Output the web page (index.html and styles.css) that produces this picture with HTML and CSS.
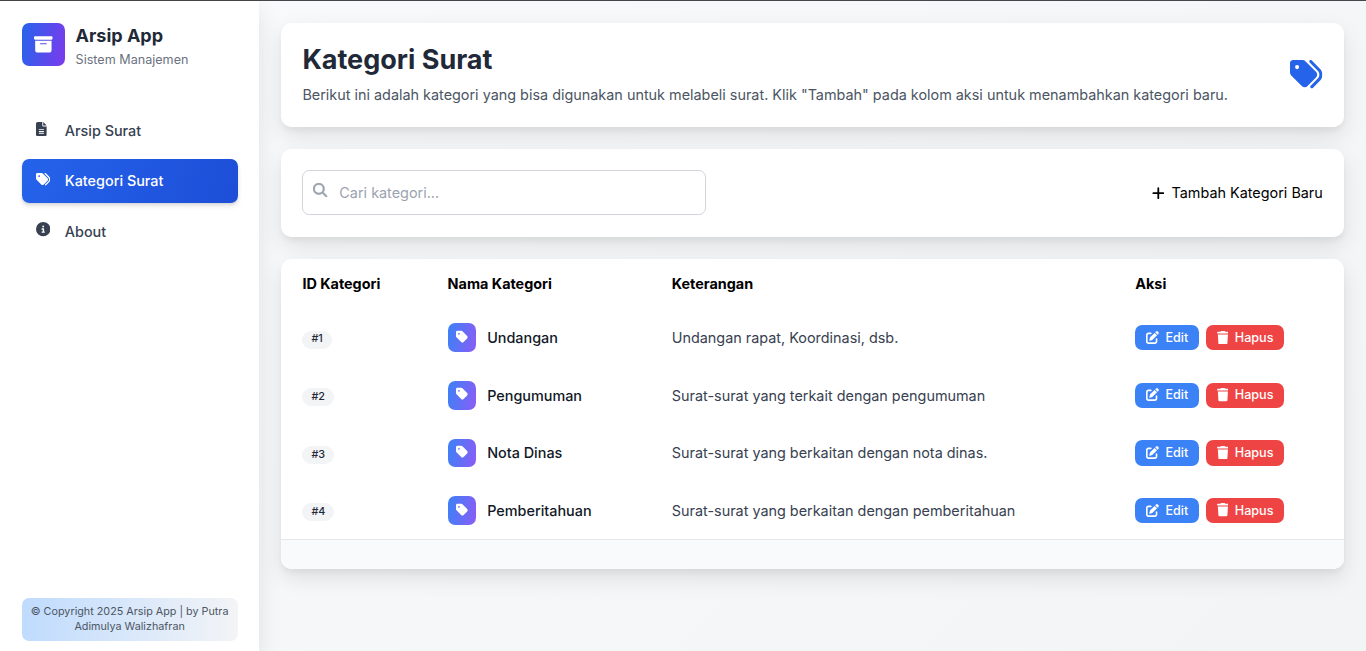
FILE: index.html
```html
<!DOCTYPE html>
<html lang="id">
<head>
<meta charset="utf-8">
<title>Kategori Surat</title>
<link rel="stylesheet" href="styles.css">
</head>
<body>
<svg class="sprite" aria-hidden="true">
  <symbol id="box" viewBox="0 0 512 512"><path d="M32 32H480c17.700 0 32 14.300 32 32V96c0 17.700-14.300 32-32 32H32C14.300 128 0 113.700 0 96V64C0 46.300 14.300 32 32 32zm0 128H480V416c0 35.300-28.700 64-64 64H96c-35.300 0-64-28.700-64-64V160zm128 80c0 8.800 7.200 16 16 16H336c8.800 0 16-7.200 16-16s-7.200-16-16-16H176c-8.800 0-16 7.200-16 16z"/></symbol>
  <symbol id="tags" viewBox="0 0 512 512"><path d="M345 39.100L472.800 168.400c52.400 53 52.400 138.200 0 191.200L360.800 472.900c-9.300 9.400-24.500 9.500-33.900 .2s-9.500-24.500-.2-33.900L438.600 325.900c33.900-34.300 33.900-89.400 0-123.700L310.900 72.900c-9.300-9.400-9.200-24.600 .2-33.900s24.600-9.200 33.900 .2zM0 229.500V80C0 53.500 21.500 32 48 32H197.500c17 0 33.300 6.700 45.300 18.700l168 168c25 25 25 65.500 0 90.500L277.300 442.700c-25 25-65.500 25-90.500 0l-168-168C6.700 262.700 0 246.500 0 229.500zM144 144a32 32 0 1 0 -64 0 32 32 0 1 0 64 0z"/></symbol>
  <symbol id="tag" viewBox="0 0 448 512"><path d="M0 80V229.500c0 17 6.700 33.300 18.700 45.300l176 176c25 25 65.500 25 90.500 0L418.700 317.300c25-25 25-65.500 0-90.500l-176-176c-12-12-28.300-18.700-45.300-18.700H48C21.500 32 0 53.500 0 80zm112 32a32 32 0 1 1 0 64 32 32 0 1 1 0-64z"/></symbol>
  <symbol id="file" viewBox="0 0 384 512"><path d="M64 0C28.700 0 0 28.700 0 64V448c0 35.300 28.700 64 64 64H320c35.300 0 64-28.700 64-64V160H256c-17.700 0-32-14.300-32-32V0H64zM256 0V128H384L256 0zM112 256H272c8.800 0 16 7.200 16 16s-7.200 16-16 16H112c-8.800 0-16-7.200-16-16s7.200-16 16-16zm0 64H272c8.800 0 16 7.200 16 16s-7.200 16-16 16H112c-8.800 0-16-7.200-16-16s7.200-16 16-16zm0 64H272c8.800 0 16 7.200 16 16s-7.200 16-16 16H112c-8.800 0-16-7.200-16-16s7.200-16 16-16z"/></symbol>
  <symbol id="info" viewBox="0 0 512 512"><path d="M256 512A256 256 0 1 0 256 0a256 256 0 1 0 0 512zM216 336h24V272H216c-13.300 0-24-10.700-24-24s10.700-24 24-24h48c13.300 0 24 10.700 24 24v88h8c13.300 0 24 10.700 24 24s-10.700 24-24 24H216c-13.300 0-24-10.700-24-24s10.700-24 24-24zm40-208a32 32 0 1 1 0 64 32 32 0 1 1 0-64z"/></symbol>
  <symbol id="search" viewBox="0 0 512 512"><path d="M416 208c0 45.900-14.900 88.300-40 122.700L502.600 457.400c12.500 12.500 12.500 32.800 0 45.300s-32.800 12.500-45.300 0L330.700 376c-34.400 25.200-76.800 40-122.700 40C93.100 416 0 322.900 0 208S93.100 0 208 0S416 93.100 416 208zM208 352a144 144 0 1 0 0-288 144 144 0 1 0 0 288z"/></symbol>
  <symbol id="plus" viewBox="0 0 448 512"><path d="M256 80c0-17.700-14.300-32-32-32s-32 14.300-32 32V224H48c-17.700 0-32 14.300-32 32s14.300 32 32 32H192V432c0 17.700 14.300 32 32 32s32-14.300 32-32V288H400c17.700 0 32-14.300 32-32s-14.300-32-32-32H256V80z"/></symbol>
  <symbol id="edit" viewBox="0 0 512 512"><path d="M471.600 21.700c-21.900-21.900-57.300-21.900-79.200 0L362.300 51.700l97.900 97.900 30.100-30.100c21.900-21.900 21.900-57.300 0-79.200L471.600 21.700zm-299.200 220c-6.100 6.100-10.800 13.600-13.500 21.900l-29.600 88.800c-2.900 8.600-.6 18.100 5.800 24.600s15.900 8.700 24.600 5.800l88.800-29.600c8.200-2.700 15.700-7.400 21.900-13.500L437.700 172.300 339.700 74.300 172.400 241.700zM96 64C43 64 0 107 0 160V416c0 53 43 96 96 96H352c53 0 96-43 96-96V320c0-17.700-14.300-32-32-32s-32 14.300-32 32v96c0 17.700-14.300 32-32 32H96c-17.700 0-32-14.300-32-32V160c0-17.700 14.300-32 32-32h96c17.700 0 32-14.300 32-32s-14.300-32-32-32H96z"/></symbol>
  <symbol id="trash" viewBox="0 0 448 512"><path d="M135.200 17.700L128 32H32C14.300 32 0 46.300 0 64S14.300 96 32 96H416c17.700 0 32-14.300 32-32s-14.300-32-32-32H320l-7.200-14.300C307.400 6.800 296.300 0 284.200 0H163.800c-12.100 0-23.200 6.800-28.600 17.700zM416 128H32L53.200 467c1.600 25.300 22.600 45 47.900 45H346.900c25.300 0 46.300-19.700 47.900-45L416 128z"/></symbol>
</svg>
<div class="app">
  <aside class="sidebar">
    <div class="brand">
      <div class="brand-logo"><svg class="icon icon-lg"><use href="#box"/></svg></div>
      <div class="brand-text">
        <div class="brand-name">Arsip App</div>
        <div class="brand-sub">Sistem Manajemen</div>
      </div>
    </div>
    <nav class="nav">
      <a class="nav-item"><span class="nav-icon"><svg class="icon icon-file"><use href="#file"/></svg></span>Arsip Surat</a>
      <a class="nav-item active"><span class="nav-icon"><svg class="icon"><use href="#tags"/></svg></span>Kategori Surat</a>
      <a class="nav-item"><span class="nav-icon"><svg class="icon"><use href="#info"/></svg></span>About</a>
    </nav>
    <div class="copyright">© Copyright 2025 Arsip App | by Putra Adimulya Walizhafran</div>
  </aside>
  <main class="main">
    <section class="card heading">
      <div>
        <h1>Kategori Surat</h1>
        <p>Berikut ini adalah kategori yang bisa digunakan untuk melabeli surat. Klik "Tambah" pada kolom aksi untuk menambahkan kategori baru.</p>
      </div>
      <svg class="icon icon-xl"><use href="#tags"/></svg>
    </section>
    <section class="card toolbar">
      <label class="search">
        <svg class="icon"><use href="#search"/></svg>
        <input type="text" placeholder="Cari kategori...">
      </label>
      <a class="add"><svg class="icon icon-narrow"><use href="#plus"/></svg>Tambah Kategori Baru</a>
    </section>
    <section class="card table-card">
      <table>
        <colgroup><col class="col-id"><col class="col-name"><col class="col-desc"><col></colgroup>
        <thead><tr><th>ID Kategori</th><th>Nama Kategori</th><th>Keterangan</th><th>Aksi</th></tr></thead>
        <tbody>
          <tr>
            <td><span class="badge">#1</span></td>
            <td><div class="name"><span class="tile"><svg class="icon icon-tag"><use href="#tag"/></svg></span>Undangan</div></td>
            <td class="desc">Undangan rapat, Koordinasi, dsb.</td>
            <td><div class="actions"><a class="btn edit"><svg class="icon icon-sm"><use href="#edit"/></svg>Edit</a><a class="btn delete"><svg class="icon icon-trash"><use href="#trash"/></svg>Hapus</a></div></td>
          </tr>
          <tr>
            <td><span class="badge">#2</span></td>
            <td><div class="name"><span class="tile"><svg class="icon icon-tag"><use href="#tag"/></svg></span>Pengumuman</div></td>
            <td class="desc">Surat-surat yang terkait dengan pengumuman</td>
            <td><div class="actions"><a class="btn edit"><svg class="icon icon-sm"><use href="#edit"/></svg>Edit</a><a class="btn delete"><svg class="icon icon-trash"><use href="#trash"/></svg>Hapus</a></div></td>
          </tr>
          <tr>
            <td><span class="badge">#3</span></td>
            <td><div class="name"><span class="tile"><svg class="icon icon-tag"><use href="#tag"/></svg></span>Nota Dinas</div></td>
            <td class="desc">Surat-surat yang berkaitan dengan nota dinas.</td>
            <td><div class="actions"><a class="btn edit"><svg class="icon icon-sm"><use href="#edit"/></svg>Edit</a><a class="btn delete"><svg class="icon icon-trash"><use href="#trash"/></svg>Hapus</a></div></td>
          </tr>
          <tr>
            <td><span class="badge">#4</span></td>
            <td><div class="name"><span class="tile"><svg class="icon icon-tag"><use href="#tag"/></svg></span>Pemberitahuan</div></td>
            <td class="desc">Surat-surat yang berkaitan dengan pemberitahuan</td>
            <td><div class="actions"><a class="btn edit"><svg class="icon icon-sm"><use href="#edit"/></svg>Edit</a><a class="btn delete"><svg class="icon icon-trash"><use href="#trash"/></svg>Hapus</a></div></td>
          </tr>
        </tbody>
      </table>
      <div class="table-foot"></div>
    </section>
  </main>
</div>
</body>
</html>
```
FILE: styles.css
```css
* { box-sizing: border-box; margin: 0; padding: 0; }
html { font-size: 14.4px; }
body {
  font-family: Inter, "Liberation Sans", sans-serif;
  line-height: 1.5;
  color: #000;
  height: 100vh;
  overflow: hidden;
}
.sprite { display: none; }
.icon { width: 1rem; height: 1rem; fill: currentColor; display: block; flex: none; }
.icon-lg { width: 1.3rem; height: 1.3rem; }
.icon-xl { width: 2.25rem; height: 2.25rem; color: #2563eb; margin: 0 0 .14rem 0; }
.icon-file { width: .75rem; }
.icon-narrow { width: .875rem; }
.icon-sm { width: .9rem; height: .9rem; margin-bottom: .05rem; }
.icon-trash { width: .82rem; height: .94rem; margin-bottom: .05rem; }
.icon-tag { width: .83rem; height: .95rem; }

.app {
  display: flex;
  height: 100vh;
  border-top: 1px solid #46464a;
  background: linear-gradient(135deg, #f9fafb, #f3f4f6);
}
.sidebar {
  width: 18rem;
  flex: none;
  display: flex;
  flex-direction: column;
  background: #fff;
  padding: 1.5rem 1.5rem .7rem;
  box-shadow: 0 .625rem 1.5625rem rgba(0,0,0,.1);
}
.brand { display: flex; align-items: center; gap: .75rem; height: 3rem; }
.brand-logo {
  width: 3rem; height: 3rem;
  display: flex; align-items: center; justify-content: center;
  border-radius: .5rem;
  color: #fff;
  background: linear-gradient(100deg, #2563eb, #7c3aed);
}
.brand-text { padding-top: .2rem; }
.brand-name { font-size: 1.25rem; line-height: 1.75rem; font-weight: 700; color: #1f2937; }
.brand-sub { font-size: .875rem; line-height: 1.25rem; color: #6b7280; margin-top: .2rem; }
.nav { display: flex; flex-direction: column; gap: .5rem; padding-top: 3rem; flex: 1; }
.nav-item {
  display: flex; align-items: center;
  padding: .75rem 1rem;
  border-radius: .5rem;
  font-weight: 500;
  color: #374151;
}
.nav-icon { width: 1.25rem; margin-right: .75rem; padding-bottom: .25rem; }
.nav-item.active {
  color: #fff;
  background: linear-gradient(110deg, #2563eb, #1d4ed8);
  box-shadow: 0 .25rem .375rem -.0625rem rgba(0,0,0,.1), 0 .125rem .25rem -.125rem rgba(0,0,0,.1);
}
.copyright {
  padding: 6px .5rem 7.4px;
  border-radius: .5rem;
  background: linear-gradient(to right, #bfdbfe, #f3f4f6);
  font-size: .75rem; line-height: 15px;
  text-align: center;
  color: #4b5563;
}

.main { flex: 1; min-width: 0; padding: 1.5rem; display: flex; flex-direction: column; gap: 1.5rem; }
.card {
  background: #fff;
  border-radius: .75rem;
  box-shadow: 0 .625rem 1.5625rem rgba(0,0,0,.1), 0 .25rem .375rem rgba(0,0,0,.04);
  flex: none;
}
.heading { display: flex; justify-content: space-between; align-items: center; padding: 1.5rem; }
.heading h1 { font-size: 1.875rem; line-height: 2.25rem; font-weight: 700; color: #1f2937; margin-bottom: .5rem; }
.heading p { color: #4b5563; }
.toolbar { display: flex; justify-content: space-between; align-items: center; padding: 1.5rem; }
.search {
  display: flex; align-items: center;
  width: 28.05rem;
  padding: .75rem .7rem;
  border: 1px solid #d1d5db;
  border-radius: .5rem;
  color: #9ca3af;
}
.search .icon { margin: 0 .8rem .4rem 0; stroke: currentColor; stroke-width: 14; }
.search input { border: 0; outline: 0; flex: 1; font: inherit; line-height: 1.5rem; height: 1.5rem; background: none; }
.search input::placeholder { color: #9ca3af; opacity: 1; }
.add { display: flex; align-items: center; gap: .5rem; }

.table-card { overflow: hidden; }
table { width: 100%; table-layout: fixed; border-collapse: collapse; }
.col-id { width: 145.2px; }
.col-name { width: 224.2px; }
.col-desc { width: 463.5px; }
th { text-align: left; padding: 1rem 1.5rem; font-weight: 700; line-height: 1.5rem; }
td { height: 4rem; padding: 0 1.5rem; vertical-align: middle; }
.badge {
  display: inline-block;
  vertical-align: middle;
  margin-top: .12rem;
  padding: .125rem .625rem;
  border-radius: 1rem;
  background: #f3f4f6;
  color: #1f2937;
  font-size: .75rem; line-height: 1rem; font-weight: 500;
}
.name { display: flex; align-items: center; gap: .75rem; font-weight: 500; color: #111827; }
.tile {
  width: 2rem; height: 2rem;
  display: flex; align-items: center; justify-content: center;
  padding-bottom: .15rem;
  border-radius: .5rem;
  color: #fff;
  background: linear-gradient(100deg, #3b82f6, #8b5cf6);
}
.desc { color: #374151; }
.actions { display: flex; gap: .46rem; }
.btn {
  display: flex; align-items: center;
  gap: .45rem;
  padding: .25rem .75rem;
  border-radius: .5rem;
  font-size: .875rem; line-height: 1.25rem; font-weight: 500;
  color: #fff;
}
.edit { background: #3b82f6; }
.delete { background: #ef4444; }
.table-foot { height: 2.07rem; border-top: 1px solid #e5e7eb; background: #f9fafb; }
```
